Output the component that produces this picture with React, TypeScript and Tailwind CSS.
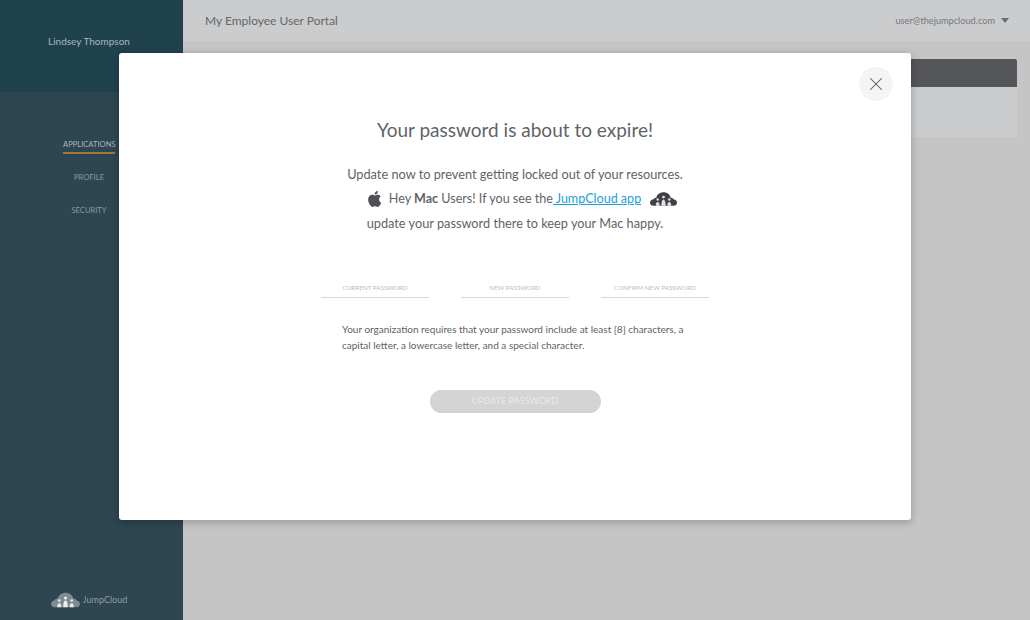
import React from 'react';
import { X } from 'lucide-react';

const font = "font-['Lato','Noto_Sans',sans-serif]";

function CloudLogo({ className, color }: { className: string; color: string }) {
  return (
    <svg viewBox="0 0 28 14" className={className} fill={color}>
      <path d="M3.500 14C1.500 14 0 12.600 0 10.800 0 9 1.400 7.700 3.200 7.600 3.800 6.300 5 5.500 6.500 5.600 7.300 2.400 10.200 0 14 0c3.700 0 6.700 2.300 7.500 5.600 1.500-.1 2.700.7 3.300 2 1.800.1 3.200 1.400 3.200 3.200C28 12.600 26.500 14 24.500 14z" />
      <g fill="#fff" opacity="0.85">
        <circle cx="8" cy="7.500" r="1.300" />
        <path d="M6 14c0-2.500.8-3.800 2-3.800s2 1.300 2 3.800z" />
        <circle cx="14" cy="5" r="1.500" />
        <path d="M11.800 14c0-4 .8-6.500 2.200-6.500s2.200 2.500 2.200 6.500z" />
        <circle cx="20" cy="7.500" r="1.300" />
        <path d="M18 14c0-2.500.8-3.800 2-3.800s2 1.300 2 3.800z" />
      </g>
    </svg>
  );
}

function AppleLogo() {
  return (
    <svg viewBox="0 0 24 24" className="w-[17px] h-[18px]" fill="#4f5154">
      <path d="M17.050 12.540c-.03-2.850 2.330-4.220 2.440-4.290-1.330-1.940-3.400-2.210-4.130-2.240-1.760-.18-3.430 1.040-4.320 1.040-.89 0-2.270-1.010-3.730-.99-1.920.03-3.690 1.120-4.680 2.830-2 3.460-.51 8.590 1.430 11.400.95 1.380 2.080 2.920 3.570 2.860 1.430-.06 1.970-.93 3.700-.93 1.730 0 2.220.93 3.730.9 1.540-.03 2.520-1.400 3.460-2.780 1.090-1.600 1.540-3.150 1.570-3.230-.03-.01-3.010-1.160-3.040-4.570zM14.200 4.170c.79-.96 1.320-2.290 1.180-3.620-1.140.05-2.520.76-3.340 1.720-.73.85-1.370 2.210-1.200 3.510 1.270.1 2.570-.65 3.360-1.610z" />
    </svg>
  );
}

function PasswordField({ label }: { label: string }) {
  return (
    <div className="w-[108px] h-[22px] border-b border-[#d9d9d9] flex items-center justify-center pt-[4px]">
      <span className="text-[6.300px] uppercase text-[#bdbdbd] whitespace-nowrap">{label}</span>
    </div>
  );
}

export default function App() {
  return (
    <div className={`${font} relative w-[1030px] h-[620px] overflow-hidden flex bg-[#c5c5c5]`}>
      <aside className="w-[183px] h-full flex flex-col bg-[#2d4651]">
        <div className="h-[92px] bg-[#20424e] flex justify-center pt-[33px] pr-[5px]">
          <span className="text-[10px] leading-4 text-[#a9b6bb]">Lindsey Thompson</span>
        </div>
        <nav className="flex flex-col items-center mt-[46px] pr-[5px] text-[7.600px] text-[#8b999f]">
          <span className="h-[16px] leading-3 border-b-2 border-[#a5773f] text-[#aab5b9] w-[52px] text-center whitespace-nowrap">APPLICATIONS</span>
          <span className="mt-[17px] leading-3">PROFILE</span>
          <span className="mt-[21px] leading-3">SECURITY</span>
        </nav>
        <div className="mt-auto mb-[12px] pr-[5px] flex items-center justify-center gap-[3px]">
          <CloudLogo className="w-[29px] h-[16px]" color="#7f8b90" />
          <span className="text-[9px] text-[#8f9ba0]">JumpCloud</span>
        </div>
      </aside>

      <main className="flex-1 flex flex-col">
        <header className="h-[41px] bg-[#cbcccd] flex items-center justify-between pl-[22px] pr-[21px]">
          <span className="text-[12px] text-[#666769]">My Employee User Portal</span>
          <div className="flex items-center gap-[5px]">
            <span className="text-[9.200px] text-[#77787a]">user@thejumpcloud.com</span>
            <span className="w-0 h-0 border-x-[4px] border-x-transparent border-t-[5px] border-t-[#6d6e70] ml-[1px]" />
          </div>
        </header>
        <div className="flex-1 pt-[18px] pr-[13px] flex justify-end">
          <div className="w-[400px] h-[78px] rounded-[2px] bg-[#cbcccd] overflow-hidden">
            <div className="h-[28px] bg-[#55565a]" />
          </div>
        </div>
      </main>

      <div className="absolute left-[119px] top-[53px] w-[792px] h-[467px] bg-white rounded-[3px] shadow-[0_2px_8px_rgba(0,0,0,0.25)] flex flex-col items-center">
        <button className="absolute right-[18px] top-[14px] w-[34px] h-[34px] rounded-full bg-[#f4f4f4] flex items-center justify-center text-[#5a5a5a]" aria-label="Close">
          <X size={22} strokeWidth={1.100} />
        </button>

        <h1 className="mt-[63px] text-[19px] leading-7 text-[#616366]">Your password is about to expire!</h1>

        <div className="mt-[18px] text-[12.750px] leading-[24.500px] text-[#616366] flex flex-col items-center">
          <p>Update now to prevent getting locked out of your resources.</p>
          <p className="flex items-center gap-[5px] pl-[14px] text-[12.550px]">
            <AppleLogo />
            <span>
              Hey <b className="font-bold">Mac</b> Users! If you see the<a className="text-[#1a9fe0] underline"> JumpCloud app</a>
            </span>
            <CloudLogo className="w-[27px] h-[14px] ml-[4px]" color="#3f4144" />
          </p>
          <p>update your password there to keep your Mac happy.</p>
        </div>

        <div className="mt-[40px] flex gap-[32px]">
          <PasswordField label="Current Password" />
          <PasswordField label="New Password" />
          <PasswordField label="Confirm New Password" />
        </div>

        <p className="mt-[23px] w-[346px] text-[10px] leading-[16px] text-[#5f6164]">
          Your organization requires that your password include at least [8] characters, a capital letter, a lowercase letter, and a special character.
        </p>

        <button className="mt-[37px] w-[171px] h-[23px] rounded-full bg-[#d4d4d4] text-[9px] text-[#e9e9e9]">UPDATE PASSWORD</button>
      </div>
    </div>
  );
}
